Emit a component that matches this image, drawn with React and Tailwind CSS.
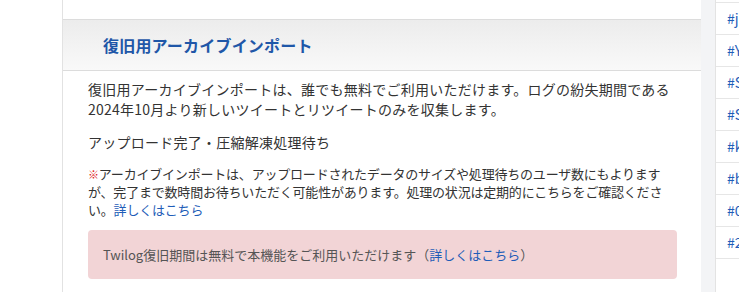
const tags = ['#jp', '#Yo', '#Sa', '#Su', '#ki', '#bo', '#0a', '#2c'];

export default function App() {
  return (
    <div
      className="flex h-[292px] w-[739px] overflow-hidden bg-white text-[#333]"
      style={{ fontFamily: '"Noto Sans CJK JP", "Liberation Sans", sans-serif' }}
    >
      <div className="w-[62px] shrink-0 bg-white" />

      {/* main panel */}
      <div className="w-[639px] shrink-0 border-l border-[#e2e2e2] bg-white">
        <div className="h-[19px]" />
        <div className="flex h-[52px] items-center border-y border-[#dcdcdc] bg-gradient-to-b from-[#ececec] to-[#f9f9f9] pl-[40px]">
          <h2 className="text-[16px] font-bold tracking-[0.2px] text-[#1f57a8]">復旧用アーカイブインポート</h2>
        </div>

        <div className="pl-[25px] pr-[24px] pt-[8px]">
          <p className="text-[14px] leading-[20px] tracking-[0.25px]">
            復旧用アーカイブインポートは、誰でも無料でご利用いただけます。ログの紛失期間である2024年10月より新しいツイートとリツイートのみを収集します。
          </p>
          <p className="mt-[13px] text-[14px] leading-[20px] tracking-[0.25px]">アップロード完了・圧縮解凍処理待ち</p>
          <p className="mt-[13px] text-[13px] leading-[18px] tracking-[-0.2px] text-[#333]">
            <span className="text-[11px] font-bold text-[#e02020]">※</span>
            アーカイブインポートは、アップロードされたデータのサイズや処理待ちのユーザ数にもよりますが、完了まで数時間お待ちいただく可能性があります。処理の状況は定期的にこちらをご確認ください。
            <a className="text-[#1f5db8]">詳しくはこちら</a>
          </p>
          <div className="mt-[11px] flex h-[49px] items-center rounded-[4px] bg-[#f2d4d6] pl-[15px] text-[13px] text-[#555]">
            Twilog復旧期間は無料で本機能をご利用いただけます（<a className="text-[#1f5db8]">詳しくはこちら</a>）
          </div>
        </div>
      </div>

      {/* gap */}
      <div className="w-[14px] shrink-0 bg-[#f3f4f6]" />

      {/* sidebar */}
      <div className="flex-1 border-l border-[#e3e3e3] bg-white pt-[2px]">
        <div className="border-t border-[#e6e6e6]">
          {tags.map((t) => (
            <div key={t} className="flex h-[32px] items-center whitespace-nowrap border-b border-[#e6e6e6] pl-[11px] text-[14px] text-[#1f5db8]">
              {t}
            </div>
          ))}
        </div>
      </div>
    </div>
  );
}
